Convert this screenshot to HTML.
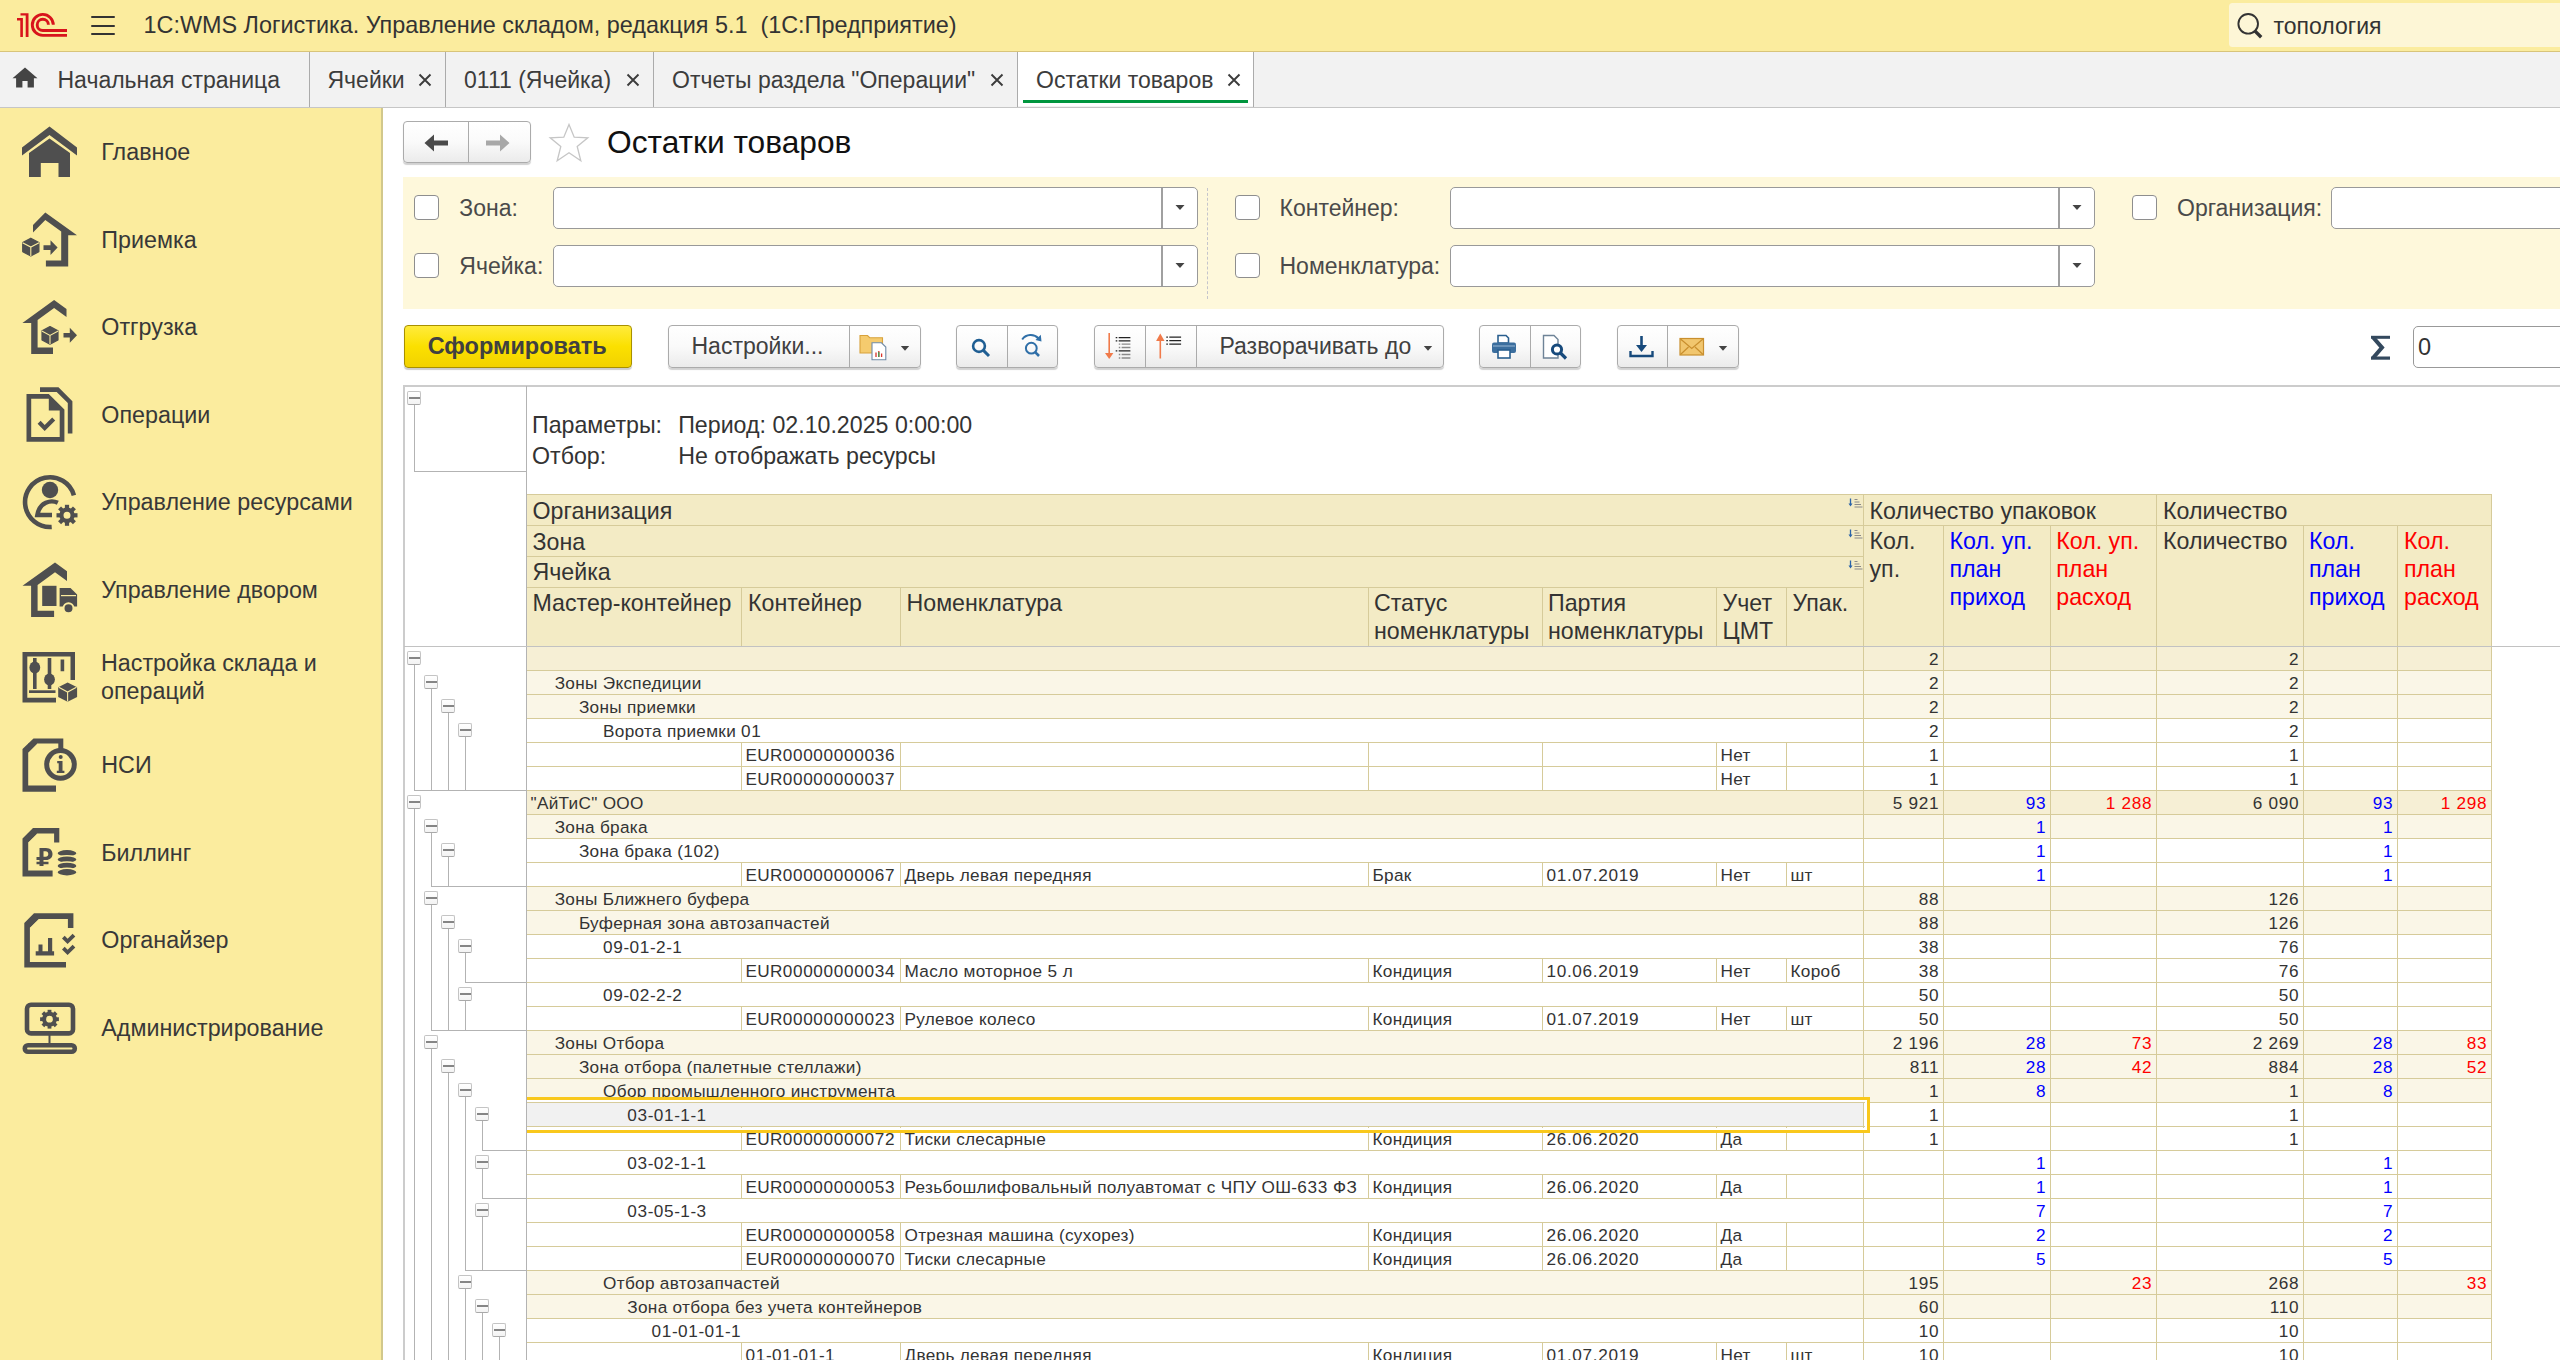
<!DOCTYPE html><html><head><meta charset="utf-8"><title>Остатки товаров</title><style>
*{box-sizing:border-box;margin:0;padding:0}
html,body{width:2560px;height:1360px;overflow:hidden;background:#fff}
body{font-family:"Liberation Sans",sans-serif;color:#333;position:relative}
.a{position:absolute;white-space:nowrap}
#hdr{left:0;top:0;width:2560px;height:52px;background:#FBEC9E;border-bottom:1.4px solid #D8C47A}
#tabs{left:0;top:52px;width:2560px;height:56px;background:#F2F2F2;border-bottom:1.5px solid #C6C6C6}
#side{left:0;top:107.5px;width:383px;height:1253px;background:#FBEC9E;border-right:2px solid #D2C88C}
.ttl{font-size:23.4px;color:#333;line-height:26px}
.tab{font-size:23px;color:#3C3C3C;line-height:26px;top:67px}
.tsep{top:52px;width:1px;height:55px;background:#C9C9C9}
.si{font-size:23px;color:#404040;line-height:28px;left:101px}
.ic{left:22px;width:56px;height:56px}
.flt{font-size:23px;color:#4A4A4A;line-height:26px}
.cb{width:25px;height:25px;border:1.6px solid #8F8F8F;border-radius:4px;background:#fff}
.inp{height:42px;border:1.8px solid #999;border-radius:5px;background:#fff}
.ddb{top:0;width:1.6px;height:100%;background:#A0A0A0}
.ddt{width:0;height:0;border-left:4.4px solid transparent;border-right:4.4px solid transparent;border-top:4.8px solid #444}
.btn{height:45px;border:1px solid #ABABAB;border-radius:4px;background:linear-gradient(#fff,#fafafa 50%,#ebebeb);box-shadow:0 1.5px 1px rgba(0,0,0,.18)}
.bdiv{top:0;width:1.3px;height:100%;background:#ABABAB}
.btxt{font-size:23px;color:#444;line-height:26px}
</style></head><body><div class="a" id="hdr"></div>
<svg class="a" style="left:10px;top:5px" width="60" height="34" viewBox="0 0 60 34">
<g fill="#D8141C"><path d="M7,13.1h5.9v18.8h-2.6v-16.4h-3.3z"/><path d="M10.5,8.2h8v23.7h-2.8v-21.5h-5.2z"/></g>
<g fill="none" stroke="#D8141C" stroke-width="2.9"><path d="M43.3,19.8A10.5,10.5 0 1 0 32.8,30.4H57"/><path d="M38.4,19.8A5.6,5.6 0 1 0 32.8,25.5H57"/></g>
</svg>
<div class="a" style="left:91px;top:15.9px;width:24px;height:2.2px;background:#333;border-radius:1px"></div>
<div class="a" style="left:91px;top:24.7px;width:24px;height:2.2px;background:#333;border-radius:1px"></div>
<div class="a" style="left:91px;top:33.3px;width:24px;height:2.2px;background:#333;border-radius:1px"></div>
<div class="a " style="top:13.99px;font-size:23.4px;line-height:23.4px;left:143.50px;color:#333;white-space:pre;">1С:WMS Логистика. Управление складом, редакция 5.1  (1С:Предприятие)</div>
<div class="a" style="left:2229px;top:3px;width:340px;height:44px;background:#FDF6D6;border-radius:3.5px"></div>
<svg class="a" style="left:2236px;top:11px" width="30" height="30" viewBox="0 0 30 30">
<circle cx="12.2" cy="12.8" r="9.8" fill="none" stroke="#333" stroke-width="1.9"/><path d="M18.6,19.6L25.2,26.2" stroke="#333" stroke-width="3.4" stroke-linecap="butt"/></svg>
<div class="a " style="top:14.93px;font-size:23px;line-height:23px;left:2273.50px;color:#333;">топология</div>
<div class="a" id="tabs"></div>
<div class="a" style="left:1018px;top:52px;width:235px;height:54px;background:#fff"></div>
<div class="a" style="left:309px;top:52px;width:1.3px;height:54.5px;background:#ABABAB"></div>
<div class="a" style="left:445px;top:52px;width:1.3px;height:54.5px;background:#ABABAB"></div>
<div class="a" style="left:653px;top:52px;width:1.3px;height:54.5px;background:#ABABAB"></div>
<div class="a" style="left:1017px;top:52px;width:1.3px;height:54.5px;background:#ABABAB"></div>
<div class="a" style="left:1253px;top:52px;width:1.3px;height:54.5px;background:#ABABAB"></div>
<div class="a" style="left:1023px;top:100px;width:225px;height:3px;background:#00963E"></div>
<svg class="a" style="left:12px;top:67px" width="26" height="21" viewBox="0 0 26 21">
<path d="M13,0.5L0.5,11.2h3.6v9.3h6.3v-6.4h5.2v6.4h6.3v-9.3h3.6z" fill="#444"/></svg>
<div class="a " style="top:68.73px;font-size:23px;line-height:23px;left:57.50px;color:#3C3C3C;">Начальная страница</div>
<div class="a " style="top:68.73px;font-size:23px;line-height:23px;left:327.50px;color:#3C3C3C;">Ячейки</div>
<svg class="a" style="left:418px;top:73px" width="14" height="14" viewBox="0 0 14 14"><path d="M1.5,1.5L12.5,12.5M12.5,1.5L1.5,12.5" stroke="#3C3C3C" stroke-width="1.9"/></svg>
<div class="a " style="top:68.73px;font-size:23px;line-height:23px;left:464.00px;color:#3C3C3C;">0111 (Ячейка)</div>
<svg class="a" style="left:626px;top:73px" width="14" height="14" viewBox="0 0 14 14"><path d="M1.5,1.5L12.5,12.5M12.5,1.5L1.5,12.5" stroke="#3C3C3C" stroke-width="1.9"/></svg>
<div class="a " style="top:68.73px;font-size:23px;line-height:23px;left:672.00px;color:#3C3C3C;">Отчеты раздела &quot;Операции&quot;</div>
<svg class="a" style="left:990px;top:73px" width="14" height="14" viewBox="0 0 14 14"><path d="M1.5,1.5L12.5,12.5M12.5,1.5L1.5,12.5" stroke="#3C3C3C" stroke-width="1.9"/></svg>
<div class="a " style="top:68.73px;font-size:23px;line-height:23px;left:1036.00px;color:#3C3C3C;">Остатки товаров</div>
<svg class="a" style="left:1226.5px;top:73px" width="14" height="14" viewBox="0 0 14 14"><path d="M1.5,1.5L12.5,12.5M12.5,1.5L1.5,12.5" stroke="#3C3C3C" stroke-width="1.9"/></svg>
<div class="a" id="side"></div>
<div class="a " style="top:140.98px;font-size:23.3px;line-height:23.3px;left:101.30px;color:#383838;">Главное</div>
<div class="a " style="top:228.58px;font-size:23.3px;line-height:23.3px;left:101.30px;color:#383838;">Приемка</div>
<div class="a " style="top:316.18px;font-size:23.3px;line-height:23.3px;left:101.30px;color:#383838;">Отгрузка</div>
<div class="a " style="top:403.78px;font-size:23.3px;line-height:23.3px;left:101.30px;color:#383838;">Операции</div>
<div class="a " style="top:491.38px;font-size:23.3px;line-height:23.3px;left:101.30px;color:#383838;">Управление ресурсами</div>
<div class="a " style="top:578.98px;font-size:23.3px;line-height:23.3px;left:101.30px;color:#383838;">Управление двором</div>
<div class="a " style="top:652.38px;font-size:23.3px;line-height:23.3px;left:101.00px;color:#383838;">Настройка склада и</div>
<div class="a " style="top:680.18px;font-size:23.3px;line-height:23.3px;left:101.00px;color:#383838;">операций</div>
<div class="a " style="top:754.18px;font-size:23.3px;line-height:23.3px;left:101.30px;color:#383838;">НСИ</div>
<div class="a " style="top:841.78px;font-size:23.3px;line-height:23.3px;left:101.30px;color:#383838;">Биллинг</div>
<div class="a " style="top:929.38px;font-size:23.3px;line-height:23.3px;left:101.30px;color:#383838;">Органайзер</div>
<div class="a " style="top:1016.98px;font-size:23.3px;line-height:23.3px;left:101.30px;color:#383838;">Администрирование</div>
<svg class="a" style="left:0;top:0" width="383" height="1100" viewBox="0 0 383 1100"><g fill="#4F4F4F"><path d="M22,147.5L49.5,126.5L77,147.5V155.5L49.5,135L22,155.5Z" /><path d="M29,153L49.5,138.5L70,153V177H58.5V163H40.8V177H29Z" /><path d="M33,225L45.3,212.5L77,235.3H68.2V266.5H45.9V260.6H61.2V231.4L45.3,220L33,232.5Z" /><path d="M30.8,238.2L38.9,242.6V251.6L30.8,256L22.7,251.6V242.6Z" stroke="#4F4F4F" stroke-width="1.2" stroke-linejoin="round"/><path d="M43.5,245.2H50.5V240.3L57.6,247.6L50.5,254.9V250H43.5Z" /><path d="M54.1,300L66.5,308.9V316.9L54.1,308L37.6,319.9V347.6H53V354H31.2V322.9H22.4Z" /><path d="M50,326.5L58,330.9V339.9L50,344.3L42,339.9V330.9Z" stroke="#4F4F4F" stroke-width="1.2" stroke-linejoin="round"/><path d="M63.5,333H69.8V327.8L77,335.3L69.8,342.8V337.6H63.5Z" /><path d="M26.5,394H48.8L64.4,409.6V441.8H26.5ZM31.2,398.7V437.1H59.7V410.5H48.8V398.7Z" fill-rule="evenodd"/><path d="M40,387.3H58.5L72.4,401.2V433.5H67.8V403L56.7,391.9H40Z" /><path d="M37.6,423.8L40.6,420.8L44.7,424.9L52.2,417.4L55.2,420.4L44.7,430.9Z" /><path d="M73.9,495.3A24.9,24.9 0 1 0 51.7,527" fill="none" stroke="#4F4F4F" stroke-width="4.6"/><circle cx="50" cy="490" r="8.2" fill="#4F4F4F"/><path d="M57.8,502.8C51,499.5 39.5,502 37.3,515H52" fill="none" stroke="#4F4F4F" stroke-width="4.4"/><rect x="64.9" y="504.8" width="4.2" height="4.6" transform="rotate(0 67 515.3)"/><rect x="64.9" y="504.8" width="4.2" height="4.6" transform="rotate(45 67 515.3)"/><rect x="64.9" y="504.8" width="4.2" height="4.6" transform="rotate(90 67 515.3)"/><rect x="64.9" y="504.8" width="4.2" height="4.6" transform="rotate(135 67 515.3)"/><rect x="64.9" y="504.8" width="4.2" height="4.6" transform="rotate(180 67 515.3)"/><rect x="64.9" y="504.8" width="4.2" height="4.6" transform="rotate(225 67 515.3)"/><rect x="64.9" y="504.8" width="4.2" height="4.6" transform="rotate(270 67 515.3)"/><rect x="64.9" y="504.8" width="4.2" height="4.6" transform="rotate(315 67 515.3)"/><circle cx="67" cy="515.3" r="5.6" fill="none" stroke="#4F4F4F" stroke-width="4.2"/><path d="M55,562.5L67,571.2V581L55,572.3L37.6,585V610.7H54.1V617H31.1V585.8H22.5Z" /><path d="M42.2,585.8H56.5V606H42.2Z" /><path d="M59.6,588H70.5L77.1,594.5V606.5H59.6Z" /><path d="M61,595.6H76" stroke="#FBEC9E" stroke-width="1.2" /><circle cx="68.5" cy="608.3" r="5" fill="#4F4F4F" stroke="#FBEC9E" stroke-width="2"/><path d="M22.5,652H75V680H70.5V656.5H27.3V697.8H56V702.6H22.5Z" /><path d="M29,690.3H55.5V693H29Z" /><path d="M34.8,658V689M49.5,658V689M62.4,659.4V671.3" fill="none" stroke="#4F4F4F" stroke-width="3.6"/><ellipse cx="34.8" cy="667.6" rx="5.4" ry="6" fill="#4F4F4F"/><ellipse cx="49.5" cy="679.6" rx="5.4" ry="6" fill="#4F4F4F"/><path d="M67.6,682.4L77.1,687.2V697L67.6,701.8L58.2,697V687.2Z" /><path d="M22.5,749L33.5,738.4H63.3V751H58.3V743.4H37.2L28.2,752.4V785.6H56V791.7H22.5Z" /><path d="M28.2,743.4H37.2L28.2,752.4Z" /><circle cx="60.5" cy="764.4" r="13.8" fill="#FBEC9E" stroke="#4F4F4F" stroke-width="5"/><path d="M58.7,761H62.5V770.8H64.4V773H56.8V770.8H58.7V763.2H57.2V761Z" /><circle cx="60.7" cy="757" r="2" fill="#4F4F4F"/><path d="M22.5,838.5L33,828H59.3V842.6H54.1V833.4H37L28.2,842.2V870.6H52.6V876.6H22.5Z" /><path d="M28.2,833.4H37L28.2,842.2Z" /><path d="M39.5,848H46C50.5,848 52.5,850.8 52.5,854C52.5,857.5 50,860 46,860H43.5V861.8H48.5V864.2H43.5V866H39.5V864.2H36.5V861.8H39.5V860H36.5V857H39.5ZM43.5,851.2V856.8H45.6C47.4,856.8 48.3,855.6 48.3,854C48.3,852.4 47.4,851.2 45.6,851.2Z" fill-rule="evenodd"/><ellipse cx="67" cy="853.2" rx="10.1" ry="3.9" fill="#4F4F4F" stroke="#FBEC9E" stroke-width="1.5"/><ellipse cx="67" cy="859.5500000000001" rx="10.1" ry="3.9" fill="#4F4F4F" stroke="#FBEC9E" stroke-width="1.5"/><ellipse cx="67" cy="865.9000000000001" rx="10.1" ry="3.9" fill="#4F4F4F" stroke="#FBEC9E" stroke-width="1.5"/><ellipse cx="67" cy="872.25" rx="10.1" ry="3.9" fill="#4F4F4F" stroke="#FBEC9E" stroke-width="1.5"/><path d="M24.3,923L34,913.3H73.4V928H67.9V918.9H38.5L29.9,927.5V962H66V967.6H24.3Z" /><path d="M29.9,918.9H38.5L29.9,927.5Z" /><path d="M35.7,951.3H54.1V955.6H35.7ZM38.5,944.5H42.5V953H38.5ZM48,938H52.2V953H48Z" /><path d="M62,938.5L64.7,935.8L67.6,938.7L72.6,933.7L75.3,936.4L67.6,944.1Z" /><path d="M62,949.5L64.7,946.8L67.6,949.7L72.6,944.7L75.3,947.4L67.6,955.1Z" /><rect x="27" y="1004.8" width="46" height="28.6" rx="4" fill="none" stroke="#4F4F4F" stroke-width="4.6"/><rect x="47.6" y="1009.8" width="3.8" height="4.4" transform="rotate(0 49.5 1019.2)"/><rect x="47.6" y="1009.8" width="3.8" height="4.4" transform="rotate(45 49.5 1019.2)"/><rect x="47.6" y="1009.8" width="3.8" height="4.4" transform="rotate(90 49.5 1019.2)"/><rect x="47.6" y="1009.8" width="3.8" height="4.4" transform="rotate(135 49.5 1019.2)"/><rect x="47.6" y="1009.8" width="3.8" height="4.4" transform="rotate(180 49.5 1019.2)"/><rect x="47.6" y="1009.8" width="3.8" height="4.4" transform="rotate(225 49.5 1019.2)"/><rect x="47.6" y="1009.8" width="3.8" height="4.4" transform="rotate(270 49.5 1019.2)"/><rect x="47.6" y="1009.8" width="3.8" height="4.4" transform="rotate(315 49.5 1019.2)"/><circle cx="49.5" cy="1019.2" r="5.4" fill="none" stroke="#4F4F4F" stroke-width="4"/><path d="M48.5,1035H50.5V1044H48.5Z" /><rect x="24.8" y="1045.3" width="50" height="6.4" rx="3.2" fill="none" stroke="#4F4F4F" stroke-width="4.6"/><path d="M22.523,242.65L30.8,247.1L39.077,242.65M30.8,247.1V256.0" fill="none" stroke="#FBEC9E" stroke-width="1.1"/><path d="M41.816,331.0L50,335.4L58.184,331.0M50,335.4V344.2" fill="none" stroke="#FBEC9E" stroke-width="1.1"/><path d="M58.76499999999999,687.35L67.6,692.1L76.435,687.35M67.6,692.1V701.6" fill="none" stroke="#FBEC9E" stroke-width="1.1"/></g></svg>
<div class="a btn" style="left:403px;top:121px;width:128px;height:42px"><div class="a bdiv" style="left:64px"></div></div>
<svg class="a" style="left:420px;top:131.5px" width="100" height="22" viewBox="0 0 100 22">
<path d="M4.5,11L14,2.5V8.5H28V13.5H14V19.5Z" fill="#4A4A4A"/>
<path d="M89.5,11L80,2.5V8.5H66V13.5H80V19.5Z" fill="#A8A8A8"/></svg>
<svg class="a" style="left:548px;top:123px" width="42" height="40" viewBox="0 0 42 40">
<path d="M21,1.5L26.2,14.2L39.8,14.8L29.2,23.5L32.8,37.8L21,29.8L9.2,37.8L12.8,23.5L2.2,14.8L15.8,14.2Z" fill="none" stroke="#C6C6C6" stroke-width="1.3" stroke-linejoin="miter"/></svg>
<div class="a " style="top:127.47px;font-size:31.7px;line-height:31.7px;left:607.00px;color:#111;">Остатки товаров</div>
<div class="a" style="left:403px;top:177px;width:2157px;height:132px;background:#FEF8DB"></div>
<div class="a" style="left:414px;top:195px;width:25px;height:25px;border:1.6px solid #8E8E8E;border-radius:4px;background:#fff"></div>
<div class="a " style="top:196.83px;font-size:23px;line-height:23px;left:459.30px;color:#4A4A4A;">Зона:</div>
<div class="a inp" style="left:553px;top:187px;width:645px"><div class="a ddb" style="left:607px"></div><svg class="a" style="left:620.5px;top:16.3px" width="10" height="7" viewBox="0 0 10 7"><path d="M0.5,1H9.5L5,6Z" fill="#444"/></svg></div>
<div class="a" style="left:414px;top:253px;width:25px;height:25px;border:1.6px solid #8E8E8E;border-radius:4px;background:#fff"></div>
<div class="a " style="top:254.83px;font-size:23px;line-height:23px;left:459.30px;color:#4A4A4A;">Ячейка:</div>
<div class="a inp" style="left:553px;top:245px;width:645px"><div class="a ddb" style="left:607px"></div><svg class="a" style="left:620.5px;top:16.3px" width="10" height="7" viewBox="0 0 10 7"><path d="M0.5,1H9.5L5,6Z" fill="#444"/></svg></div>
<div class="a" style="left:1207px;top:188px;width:0;height:111px;border-left:1px dashed #C5C5CC"></div>
<div class="a" style="left:1235px;top:195px;width:25px;height:25px;border:1.6px solid #8E8E8E;border-radius:4px;background:#fff"></div>
<div class="a " style="top:196.83px;font-size:23px;line-height:23px;left:1279.50px;color:#4A4A4A;">Контейнер:</div>
<div class="a inp" style="left:1450px;top:187px;width:645px"><div class="a ddb" style="left:607px"></div><svg class="a" style="left:620.5px;top:16.3px" width="10" height="7" viewBox="0 0 10 7"><path d="M0.5,1H9.5L5,6Z" fill="#444"/></svg></div>
<div class="a" style="left:1235px;top:253px;width:25px;height:25px;border:1.6px solid #8E8E8E;border-radius:4px;background:#fff"></div>
<div class="a " style="top:254.83px;font-size:23px;line-height:23px;left:1279.50px;color:#4A4A4A;">Номенклатура:</div>
<div class="a inp" style="left:1450px;top:245px;width:645px"><div class="a ddb" style="left:607px"></div><svg class="a" style="left:620.5px;top:16.3px" width="10" height="7" viewBox="0 0 10 7"><path d="M0.5,1H9.5L5,6Z" fill="#444"/></svg></div>
<div class="a" style="left:2132px;top:195px;width:25px;height:25px;border:1.6px solid #8E8E8E;border-radius:4px;background:#fff"></div>
<div class="a " style="top:196.83px;font-size:23px;line-height:23px;left:2177.00px;color:#4A4A4A;">Организация:</div>
<div class="a inp" style="left:2331px;top:187px;width:260px"></div>
<div class="a" style="left:404px;top:325px;width:228px;height:43px;border:1.2px solid #A89000;border-radius:4px;background:linear-gradient(#FFEB3C,#FBE000 50%,#F2D200);box-shadow:0 1.5px 1px rgba(0,0,0,.2)"></div>
<div class="a " style="top:334.71px;font-size:23.5px;line-height:23.5px;left:427.70px;color:#404040;font-weight:bold;">Сформировать</div>
<div class="a btn" style="left:667.5px;top:325px;width:253px;height:43px"><div class="a bdiv" style="left:180.5px"></div></div>
<div class="a " style="top:335.33px;font-size:23px;line-height:23px;left:691.50px;color:#404040;">Настройки...</div>
<div class="a btn" style="left:955.5px;top:325px;width:102px;height:43px"><div class="a bdiv" style="left:50.5px"></div></div>
<div class="a btn" style="left:1093.5px;top:325px;width:350px;height:43px"><div class="a bdiv" style="left:50.5px"></div><div class="a bdiv" style="left:101.5px"></div></div>
<div class="a " style="top:335.33px;font-size:23px;line-height:23px;left:1219.50px;color:#404040;">Разворачивать до</div>
<div class="a btn" style="left:1478.5px;top:325px;width:102px;height:43px"><div class="a bdiv" style="left:50.5px"></div></div>
<div class="a btn" style="left:1616.5px;top:325px;width:122px;height:43px"><div class="a bdiv" style="left:49.5px"></div></div>
<svg class="a" style="left:900px;top:345px" width="10" height="7" viewBox="0 0 10 7"><path d="M0.8,1H9.2L5,5.8Z" fill="#444"/></svg>
<svg class="a" style="left:1423px;top:345px" width="10" height="7" viewBox="0 0 10 7"><path d="M0.8,1H9.2L5,5.8Z" fill="#444"/></svg>
<svg class="a" style="left:1718px;top:345px" width="10" height="7" viewBox="0 0 10 7"><path d="M0.8,1H9.2L5,5.8Z" fill="#444"/></svg>
<svg class="a" style="left:0;top:0" width="1760" height="380" viewBox="0 0 1760 380">
<!-- settings folder -->
<path d="M860,335.5h7.5l2.2,2.2h12.8v15.3h-22.5z" fill="#F5CB6E" stroke="#D8A23C" stroke-width="1.1"/>
<path d="M872,342.8h9.5l4.3,4.3v12.6h-13.8z" fill="#fff" stroke="#6F8AA6" stroke-width="1.1"/>
<path d="M876,357v-4.5M878.8,357v-6M881.6,357v-3.5" stroke="#D9342B" stroke-width="1.3"/><path d="M878.8,357v-5" stroke="#3E9E52" stroke-width="1.3"/>
<!-- search -->
<circle cx="979" cy="346" r="5.9" fill="none" stroke="#1F5E93" stroke-width="2.6"/><path d="M983.4,350.4L989,356" stroke="#1F5E93" stroke-width="3"/>
<!-- search again -->
<circle cx="1031.3" cy="348.2" r="5.4" fill="none" stroke="#2F6FA8" stroke-width="2"/><path d="M1035.2,352.1L1039,356" stroke="#2F6FA8" stroke-width="2.6"/>
<path d="M1022.2,339.5A10.5,10.5 0 0 1 1038.5,338.5" fill="none" stroke="#2F6FA8" stroke-width="2"/><path d="M1040.8,334.8L1041.5,341.5L1035.5,340Z" fill="#2F6FA8"/>
<!-- sort down -->
<path d="M1109.2,333V357" stroke="#F07A4A" stroke-width="1.6"/><path d="M1105,353L1109.2,359L1113.4,353Z" fill="#F07A4A"/>
<path d="M1115.7,337.6h14.7M1115.7,340.9h14.7M1115.7,350.9h14.7" stroke="#222" stroke-width="1.3" stroke-dasharray="1.6 1.4 12"/>
<path d="M1118.8,344.2h11.6M1118.8,347.5h11.6M1118.8,354.5h11.6M1118.8,358h11.6" stroke="#8A8A8A" stroke-width="1.3" stroke-dasharray="1.5 1.3 12"/>
<!-- sort up -->
<path d="M1160.3,337.5V358.5" stroke="#F07A4A" stroke-width="1.6"/><path d="M1156.1,341L1160.3,333.5L1164.5,341Z" fill="#F07A4A"/>
<path d="M1166.3,337.2h14.8M1166.3,340.7h14.8M1166.3,344.2h14.8" stroke="#222" stroke-width="1.3" stroke-dasharray="1.6 1.4 12"/>
<!-- print -->
<path d="M1498,335.5h8l2.5,2.5v5h-10.5z" fill="#fff" stroke="#2A5F8F" stroke-width="1.6"/>
<rect x="1492" y="342.5" width="24" height="10.5" rx="2" fill="#3B6E9E"/>
<rect x="1498" y="350" width="12" height="8" fill="#fff" stroke="#2A5F8F" stroke-width="1.6"/>
<path d="M1493,346h22" stroke="#9BB8D4" stroke-width="1"/>
<!-- preview -->
<path d="M1543.5,335.5h10.5l4,4v18.5h-14.5z" fill="#fff" stroke="#6E8397" stroke-width="1.4"/>
<circle cx="1557" cy="349.5" r="4.6" fill="#fff" stroke="#174A7C" stroke-width="3"/><path d="M1560.5,353L1566,358.5" stroke="#174A7C" stroke-width="3.2"/>
<!-- save -->
<path d="M1641.5,336V350" stroke="#174A7C" stroke-width="2.6"/><path d="M1636,345L1641.5,352L1647,345Z" fill="#174A7C"/>
<path d="M1630.5,351V356H1652.5V351" fill="none" stroke="#174A7C" stroke-width="2.4"/>
<!-- mail -->
<rect x="1680" y="338.5" width="23.5" height="16.5" fill="#F1C66E" stroke="#C98F2E" stroke-width="1.2"/>
<path d="M1680.5,339L1691.75,348.5L1703,339M1680.5,354.5L1688.5,347M1703,354.5L1695,347" fill="none" stroke="#C98F2E" stroke-width="1.2"/>
</svg>
<svg class="a" style="left:2360px;top:330px" width="40" height="36" viewBox="2360 330 40 36"><g fill="#34495E"><rect x="2371" y="335.8" width="19" height="3"/><rect x="2371" y="356.5" width="19" height="3.2"/></g><path d="M2373.2,337.5L2382,347.6L2373.2,357.7" fill="none" stroke="#34495E" stroke-width="4" stroke-linejoin="miter"/></svg>
<div class="a inp" style="left:2413px;top:326px;width:200px;height:42px"></div>
<div class="a " style="top:336.31px;font-size:23.5px;line-height:23.5px;left:2418.00px;color:#333;">0</div>
<div class="a" style="left:403px;top:385px;width:2157px;height:2px;background:#CCCCCC"></div>
<div class="a" style="left:403px;top:385px;width:2px;height:975px;background:#CCCCCC"></div>
<div class="a" style="left:526px;top:386px;width:1px;height:974px;background:#B3B3B3"></div>
<div class="a" style="left:414px;top:405px;width:1px;height:66px;background:#B3B3B3"></div>
<div class="a" style="left:414px;top:471px;width:112px;height:1px;background:#B3B3B3"></div>
<div class="a" style="left:407px;top:391px;width:14px;height:14px;border:1px solid #C4C4C4;border-bottom-color:#A9A9A9;border-radius:2px;background:linear-gradient(#fff,#F3F3F3)"><div class="a" style="left:1.2px;top:5.2px;width:10.4px;height:2px;background:#858585"></div></div>
<div class="a " style="top:413.96px;font-size:23.2px;line-height:23.2px;left:532.00px;color:#333;">Параметры:</div>
<div class="a " style="top:413.96px;font-size:23.2px;line-height:23.2px;left:678.20px;color:#333;">Период: 02.10.2025 0:00:00</div>
<div class="a " style="top:444.56px;font-size:23.2px;line-height:23.2px;left:532.00px;color:#333;">Отбор:</div>
<div class="a " style="top:444.56px;font-size:23.2px;line-height:23.2px;left:678.20px;color:#333;">Не отображать ресурсы</div>
<div class="a" style="left:527px;top:494px;width:1964px;height:152px;background:#F3EBC5"></div>
<div class="a" style="left:527px;top:494px;width:1964px;height:1px;background:#D6CB9A"></div>
<div class="a" style="left:527px;top:525px;width:1964px;height:1px;background:#D6CB9A"></div>
<div class="a" style="left:527px;top:556px;width:1336px;height:1px;background:#D6CB9A"></div>
<div class="a" style="left:527px;top:587px;width:1336px;height:1px;background:#D6CB9A"></div>
<div class="a" style="left:1863px;top:494px;width:1px;height:152px;background:#D6CB9A"></div>
<div class="a" style="left:2156px;top:494px;width:1px;height:152px;background:#D6CB9A"></div>
<div class="a" style="left:2491px;top:494px;width:1px;height:152px;background:#D6CB9A"></div>
<div class="a" style="left:1943px;top:525px;width:1px;height:121px;background:#D6CB9A"></div>
<div class="a" style="left:2050px;top:525px;width:1px;height:121px;background:#D6CB9A"></div>
<div class="a" style="left:2303px;top:525px;width:1px;height:121px;background:#D6CB9A"></div>
<div class="a" style="left:2397px;top:525px;width:1px;height:121px;background:#D6CB9A"></div>
<div class="a" style="left:741px;top:587px;width:1px;height:59px;background:#D6CB9A"></div>
<div class="a" style="left:900px;top:587px;width:1px;height:59px;background:#D6CB9A"></div>
<div class="a" style="left:1368px;top:587px;width:1px;height:59px;background:#D6CB9A"></div>
<div class="a" style="left:1542px;top:587px;width:1px;height:59px;background:#D6CB9A"></div>
<div class="a" style="left:1716px;top:587px;width:1px;height:59px;background:#D6CB9A"></div>
<div class="a" style="left:1786px;top:587px;width:1px;height:59px;background:#D6CB9A"></div>
<div class="a " style="top:499.86px;font-size:23.2px;line-height:23.2px;left:532.50px;color:#333;">Организация</div>
<div class="a " style="top:530.66px;font-size:23.2px;line-height:23.2px;left:532.50px;color:#333;">Зона</div>
<div class="a " style="top:561.36px;font-size:23.2px;line-height:23.2px;left:532.50px;color:#333;">Ячейка</div>
<svg class="a" style="left:1848px;top:498px" width="15" height="10" viewBox="0 0 15 10"><path d="M2.5,0.5V7" stroke="#2B63A8" stroke-width="1.3"/><path d="M0.5,5.5L2.5,8.5L4.5,5.5Z" fill="#2B63A8"/><path d="M6.5,1.5h3M6.5,4h5M6.5,6.5h6.5M6.5,9h8" stroke="#8A8A8A" stroke-width="1"/></svg>
<svg class="a" style="left:1848px;top:529px" width="15" height="10" viewBox="0 0 15 10"><path d="M2.5,0.5V7" stroke="#2B63A8" stroke-width="1.3"/><path d="M0.5,5.5L2.5,8.5L4.5,5.5Z" fill="#2B63A8"/><path d="M6.5,1.5h3M6.5,4h5M6.5,6.5h6.5M6.5,9h8" stroke="#8A8A8A" stroke-width="1"/></svg>
<svg class="a" style="left:1848px;top:560px" width="15" height="10" viewBox="0 0 15 10"><path d="M2.5,0.5V7" stroke="#2B63A8" stroke-width="1.3"/><path d="M0.5,5.5L2.5,8.5L4.5,5.5Z" fill="#2B63A8"/><path d="M6.5,1.5h3M6.5,4h5M6.5,6.5h6.5M6.5,9h8" stroke="#8A8A8A" stroke-width="1"/></svg>
<div class="a " style="top:592.16px;font-size:23.2px;line-height:23.2px;left:532.50px;color:#333;">Мастер-контейнер</div>
<div class="a " style="top:592.16px;font-size:23.2px;line-height:23.2px;left:748.00px;color:#333;">Контейнер</div>
<div class="a " style="top:592.16px;font-size:23.2px;line-height:23.2px;left:906.50px;color:#333;">Номенклатура</div>
<div class="a " style="top:592.16px;font-size:23.2px;line-height:23.2px;left:1374.00px;color:#333;">Статус</div>
<div class="a " style="top:620.36px;font-size:23.2px;line-height:23.2px;left:1374.00px;color:#333;">номенклатуры</div>
<div class="a " style="top:592.16px;font-size:23.2px;line-height:23.2px;left:1548.00px;color:#333;">Партия</div>
<div class="a " style="top:620.36px;font-size:23.2px;line-height:23.2px;left:1548.00px;color:#333;">номенклатуры</div>
<div class="a " style="top:592.16px;font-size:23.2px;line-height:23.2px;left:1722.50px;color:#333;">Учет</div>
<div class="a " style="top:620.36px;font-size:23.2px;line-height:23.2px;left:1722.50px;color:#333;">ЦМТ</div>
<div class="a " style="top:592.16px;font-size:23.2px;line-height:23.2px;left:1792.50px;color:#333;">Упак.</div>
<div class="a " style="top:499.86px;font-size:23.2px;line-height:23.2px;left:1869.50px;color:#333;">Количество упаковок</div>
<div class="a " style="top:499.86px;font-size:23.2px;line-height:23.2px;left:2163.00px;color:#333;">Количество</div>
<div class="a " style="top:529.76px;font-size:23.2px;line-height:23.2px;left:1869.50px;color:#333;">Кол.</div>
<div class="a " style="top:558.16px;font-size:23.2px;line-height:23.2px;left:1869.50px;color:#333;">уп.</div>
<div class="a " style="top:529.76px;font-size:23.2px;line-height:23.2px;left:1949.50px;color:#0000FF;">Кол. уп.</div>
<div class="a " style="top:558.16px;font-size:23.2px;line-height:23.2px;left:1949.50px;color:#0000FF;">план</div>
<div class="a " style="top:586.36px;font-size:23.2px;line-height:23.2px;left:1949.50px;color:#0000FF;">приход</div>
<div class="a " style="top:529.76px;font-size:23.2px;line-height:23.2px;left:2056.30px;color:#FF0000;">Кол. уп.</div>
<div class="a " style="top:558.16px;font-size:23.2px;line-height:23.2px;left:2056.30px;color:#FF0000;">план</div>
<div class="a " style="top:586.36px;font-size:23.2px;line-height:23.2px;left:2056.30px;color:#FF0000;">расход</div>
<div class="a " style="top:529.76px;font-size:23.2px;line-height:23.2px;left:2163.00px;color:#333;">Количество</div>
<div class="a " style="top:529.76px;font-size:23.2px;line-height:23.2px;left:2309.00px;color:#0000FF;">Кол.</div>
<div class="a " style="top:558.16px;font-size:23.2px;line-height:23.2px;left:2309.00px;color:#0000FF;">план</div>
<div class="a " style="top:586.36px;font-size:23.2px;line-height:23.2px;left:2309.00px;color:#0000FF;">приход</div>
<div class="a " style="top:529.76px;font-size:23.2px;line-height:23.2px;left:2404.00px;color:#FF0000;">Кол.</div>
<div class="a " style="top:558.16px;font-size:23.2px;line-height:23.2px;left:2404.00px;color:#FF0000;">план</div>
<div class="a " style="top:586.36px;font-size:23.2px;line-height:23.2px;left:2404.00px;color:#FF0000;">расход</div>
<div class="a" style="left:527px;top:646px;width:1964px;height:24px;background:#F6EFD5"></div>
<div class="a" style="left:527px;top:670px;width:1964px;height:24px;background:#FAF6E7"></div>
<div class="a" style="left:527px;top:694px;width:1964px;height:24px;background:#FAF6E7"></div>
<div class="a" style="left:527px;top:790px;width:1964px;height:24px;background:#F6EFD5"></div>
<div class="a" style="left:527px;top:814px;width:1964px;height:24px;background:#FAF6E7"></div>
<div class="a" style="left:527px;top:886px;width:1964px;height:24px;background:#FAF6E7"></div>
<div class="a" style="left:527px;top:910px;width:1964px;height:24px;background:#FAF6E7"></div>
<div class="a" style="left:527px;top:1030px;width:1964px;height:24px;background:#FAF6E7"></div>
<div class="a" style="left:527px;top:1054px;width:1964px;height:24px;background:#FAF6E7"></div>
<div class="a" style="left:527px;top:1078px;width:1964px;height:24px;background:#FAF6E7"></div>
<div class="a" style="left:527px;top:1102px;width:1336px;height:24px;background:#F1F1F1"></div>
<div class="a" style="left:527px;top:1270px;width:1964px;height:24px;background:#FAF6E7"></div>
<div class="a" style="left:527px;top:1294px;width:1964px;height:24px;background:#FAF6E7"></div>
<div class="a" style="left:527px;top:670px;width:1964px;height:1px;background:#D6CB9A"></div>
<div class="a" style="left:527px;top:694px;width:1964px;height:1px;background:#D6CB9A"></div>
<div class="a" style="left:527px;top:718px;width:1964px;height:1px;background:#D6CB9A"></div>
<div class="a" style="left:527px;top:742px;width:1964px;height:1px;background:#D6CB9A"></div>
<div class="a" style="left:527px;top:766px;width:1964px;height:1px;background:#D6CB9A"></div>
<div class="a" style="left:741px;top:742px;width:1px;height:24px;background:#D6CB9A"></div>
<div class="a" style="left:900px;top:742px;width:1px;height:24px;background:#D6CB9A"></div>
<div class="a" style="left:1368px;top:742px;width:1px;height:24px;background:#D6CB9A"></div>
<div class="a" style="left:1542px;top:742px;width:1px;height:24px;background:#D6CB9A"></div>
<div class="a" style="left:1716px;top:742px;width:1px;height:24px;background:#D6CB9A"></div>
<div class="a" style="left:1786px;top:742px;width:1px;height:24px;background:#D6CB9A"></div>
<div class="a" style="left:527px;top:790px;width:1964px;height:1px;background:#D6CB9A"></div>
<div class="a" style="left:741px;top:766px;width:1px;height:24px;background:#D6CB9A"></div>
<div class="a" style="left:900px;top:766px;width:1px;height:24px;background:#D6CB9A"></div>
<div class="a" style="left:1368px;top:766px;width:1px;height:24px;background:#D6CB9A"></div>
<div class="a" style="left:1542px;top:766px;width:1px;height:24px;background:#D6CB9A"></div>
<div class="a" style="left:1716px;top:766px;width:1px;height:24px;background:#D6CB9A"></div>
<div class="a" style="left:1786px;top:766px;width:1px;height:24px;background:#D6CB9A"></div>
<div class="a" style="left:527px;top:814px;width:1964px;height:1px;background:#D6CB9A"></div>
<div class="a" style="left:527px;top:838px;width:1964px;height:1px;background:#D6CB9A"></div>
<div class="a" style="left:527px;top:862px;width:1964px;height:1px;background:#D6CB9A"></div>
<div class="a" style="left:527px;top:886px;width:1964px;height:1px;background:#D6CB9A"></div>
<div class="a" style="left:741px;top:862px;width:1px;height:24px;background:#D6CB9A"></div>
<div class="a" style="left:900px;top:862px;width:1px;height:24px;background:#D6CB9A"></div>
<div class="a" style="left:1368px;top:862px;width:1px;height:24px;background:#D6CB9A"></div>
<div class="a" style="left:1542px;top:862px;width:1px;height:24px;background:#D6CB9A"></div>
<div class="a" style="left:1716px;top:862px;width:1px;height:24px;background:#D6CB9A"></div>
<div class="a" style="left:1786px;top:862px;width:1px;height:24px;background:#D6CB9A"></div>
<div class="a" style="left:527px;top:910px;width:1964px;height:1px;background:#D6CB9A"></div>
<div class="a" style="left:527px;top:934px;width:1964px;height:1px;background:#D6CB9A"></div>
<div class="a" style="left:527px;top:958px;width:1964px;height:1px;background:#D6CB9A"></div>
<div class="a" style="left:527px;top:982px;width:1964px;height:1px;background:#D6CB9A"></div>
<div class="a" style="left:741px;top:958px;width:1px;height:24px;background:#D6CB9A"></div>
<div class="a" style="left:900px;top:958px;width:1px;height:24px;background:#D6CB9A"></div>
<div class="a" style="left:1368px;top:958px;width:1px;height:24px;background:#D6CB9A"></div>
<div class="a" style="left:1542px;top:958px;width:1px;height:24px;background:#D6CB9A"></div>
<div class="a" style="left:1716px;top:958px;width:1px;height:24px;background:#D6CB9A"></div>
<div class="a" style="left:1786px;top:958px;width:1px;height:24px;background:#D6CB9A"></div>
<div class="a" style="left:527px;top:1006px;width:1964px;height:1px;background:#D6CB9A"></div>
<div class="a" style="left:527px;top:1030px;width:1964px;height:1px;background:#D6CB9A"></div>
<div class="a" style="left:741px;top:1006px;width:1px;height:24px;background:#D6CB9A"></div>
<div class="a" style="left:900px;top:1006px;width:1px;height:24px;background:#D6CB9A"></div>
<div class="a" style="left:1368px;top:1006px;width:1px;height:24px;background:#D6CB9A"></div>
<div class="a" style="left:1542px;top:1006px;width:1px;height:24px;background:#D6CB9A"></div>
<div class="a" style="left:1716px;top:1006px;width:1px;height:24px;background:#D6CB9A"></div>
<div class="a" style="left:1786px;top:1006px;width:1px;height:24px;background:#D6CB9A"></div>
<div class="a" style="left:527px;top:1054px;width:1964px;height:1px;background:#D6CB9A"></div>
<div class="a" style="left:527px;top:1078px;width:1964px;height:1px;background:#D6CB9A"></div>
<div class="a" style="left:527px;top:1102px;width:1964px;height:1px;background:#D6CB9A"></div>
<div class="a" style="left:527px;top:1126px;width:1964px;height:1px;background:#D6CB9A"></div>
<div class="a" style="left:527px;top:1150px;width:1964px;height:1px;background:#D6CB9A"></div>
<div class="a" style="left:741px;top:1126px;width:1px;height:24px;background:#D6CB9A"></div>
<div class="a" style="left:900px;top:1126px;width:1px;height:24px;background:#D6CB9A"></div>
<div class="a" style="left:1368px;top:1126px;width:1px;height:24px;background:#D6CB9A"></div>
<div class="a" style="left:1542px;top:1126px;width:1px;height:24px;background:#D6CB9A"></div>
<div class="a" style="left:1716px;top:1126px;width:1px;height:24px;background:#D6CB9A"></div>
<div class="a" style="left:1786px;top:1126px;width:1px;height:24px;background:#D6CB9A"></div>
<div class="a" style="left:527px;top:1174px;width:1964px;height:1px;background:#D6CB9A"></div>
<div class="a" style="left:527px;top:1198px;width:1964px;height:1px;background:#D6CB9A"></div>
<div class="a" style="left:741px;top:1174px;width:1px;height:24px;background:#D6CB9A"></div>
<div class="a" style="left:900px;top:1174px;width:1px;height:24px;background:#D6CB9A"></div>
<div class="a" style="left:1368px;top:1174px;width:1px;height:24px;background:#D6CB9A"></div>
<div class="a" style="left:1542px;top:1174px;width:1px;height:24px;background:#D6CB9A"></div>
<div class="a" style="left:1716px;top:1174px;width:1px;height:24px;background:#D6CB9A"></div>
<div class="a" style="left:1786px;top:1174px;width:1px;height:24px;background:#D6CB9A"></div>
<div class="a" style="left:527px;top:1222px;width:1964px;height:1px;background:#D6CB9A"></div>
<div class="a" style="left:527px;top:1246px;width:1964px;height:1px;background:#D6CB9A"></div>
<div class="a" style="left:741px;top:1222px;width:1px;height:24px;background:#D6CB9A"></div>
<div class="a" style="left:900px;top:1222px;width:1px;height:24px;background:#D6CB9A"></div>
<div class="a" style="left:1368px;top:1222px;width:1px;height:24px;background:#D6CB9A"></div>
<div class="a" style="left:1542px;top:1222px;width:1px;height:24px;background:#D6CB9A"></div>
<div class="a" style="left:1716px;top:1222px;width:1px;height:24px;background:#D6CB9A"></div>
<div class="a" style="left:1786px;top:1222px;width:1px;height:24px;background:#D6CB9A"></div>
<div class="a" style="left:527px;top:1270px;width:1964px;height:1px;background:#D6CB9A"></div>
<div class="a" style="left:741px;top:1246px;width:1px;height:24px;background:#D6CB9A"></div>
<div class="a" style="left:900px;top:1246px;width:1px;height:24px;background:#D6CB9A"></div>
<div class="a" style="left:1368px;top:1246px;width:1px;height:24px;background:#D6CB9A"></div>
<div class="a" style="left:1542px;top:1246px;width:1px;height:24px;background:#D6CB9A"></div>
<div class="a" style="left:1716px;top:1246px;width:1px;height:24px;background:#D6CB9A"></div>
<div class="a" style="left:1786px;top:1246px;width:1px;height:24px;background:#D6CB9A"></div>
<div class="a" style="left:527px;top:1294px;width:1964px;height:1px;background:#D6CB9A"></div>
<div class="a" style="left:527px;top:1318px;width:1964px;height:1px;background:#D6CB9A"></div>
<div class="a" style="left:527px;top:1342px;width:1964px;height:1px;background:#D6CB9A"></div>
<div class="a" style="left:527px;top:1366px;width:1964px;height:1px;background:#D6CB9A"></div>
<div class="a" style="left:741px;top:1342px;width:1px;height:24px;background:#D6CB9A"></div>
<div class="a" style="left:900px;top:1342px;width:1px;height:24px;background:#D6CB9A"></div>
<div class="a" style="left:1368px;top:1342px;width:1px;height:24px;background:#D6CB9A"></div>
<div class="a" style="left:1542px;top:1342px;width:1px;height:24px;background:#D6CB9A"></div>
<div class="a" style="left:1716px;top:1342px;width:1px;height:24px;background:#D6CB9A"></div>
<div class="a" style="left:1786px;top:1342px;width:1px;height:24px;background:#D6CB9A"></div>
<div class="a" style="left:1863px;top:646px;width:1px;height:714px;background:#D6CB9A"></div>
<div class="a" style="left:1943px;top:646px;width:1px;height:714px;background:#D6CB9A"></div>
<div class="a" style="left:2050px;top:646px;width:1px;height:714px;background:#D6CB9A"></div>
<div class="a" style="left:2156px;top:646px;width:1px;height:714px;background:#D6CB9A"></div>
<div class="a" style="left:2303px;top:646px;width:1px;height:714px;background:#D6CB9A"></div>
<div class="a" style="left:2397px;top:646px;width:1px;height:714px;background:#D6CB9A"></div>
<div class="a" style="left:2491px;top:646px;width:1px;height:714px;background:#D6CB9A"></div>
<div class="a" style="left:404px;top:646px;width:2156px;height:1px;background:#C2C2C2"></div>
<div class="a " style="top:651.04px;font-size:17.2px;line-height:17.2px;right:620.84px;color:#333;letter-spacing:0.66px;">2</div>
<div class="a " style="top:651.04px;font-size:17.2px;line-height:17.2px;right:260.84px;color:#333;letter-spacing:0.66px;">2</div>
<div class="a " style="top:675.04px;font-size:17.2px;line-height:17.2px;left:554.70px;color:#333;letter-spacing:0.3px;">Зоны Экспедиции</div>
<div class="a " style="top:675.04px;font-size:17.2px;line-height:17.2px;right:620.84px;color:#333;letter-spacing:0.66px;">2</div>
<div class="a " style="top:675.04px;font-size:17.2px;line-height:17.2px;right:260.84px;color:#333;letter-spacing:0.66px;">2</div>
<div class="a " style="top:699.04px;font-size:17.2px;line-height:17.2px;left:578.90px;color:#333;letter-spacing:0.3px;">Зоны приемки</div>
<div class="a " style="top:699.04px;font-size:17.2px;line-height:17.2px;right:620.84px;color:#333;letter-spacing:0.66px;">2</div>
<div class="a " style="top:699.04px;font-size:17.2px;line-height:17.2px;right:260.84px;color:#333;letter-spacing:0.66px;">2</div>
<div class="a " style="top:723.04px;font-size:17.2px;line-height:17.2px;left:603.10px;color:#333;letter-spacing:0.3px;">Ворота приемки <span style="letter-spacing:0.66px">01</span></div>
<div class="a " style="top:723.04px;font-size:17.2px;line-height:17.2px;right:620.84px;color:#333;letter-spacing:0.66px;">2</div>
<div class="a " style="top:723.04px;font-size:17.2px;line-height:17.2px;right:260.84px;color:#333;letter-spacing:0.66px;">2</div>
<div class="a " style="top:747.04px;font-size:17.2px;line-height:17.2px;left:745.50px;color:#333;letter-spacing:0.3px;">EUR<span style="letter-spacing:0.66px">00000000036</span></div>
<div class="a " style="top:747.04px;font-size:17.2px;line-height:17.2px;left:1720.50px;color:#333;letter-spacing:0.3px;">Нет</div>
<div class="a " style="top:747.04px;font-size:17.2px;line-height:17.2px;right:620.84px;color:#333;letter-spacing:0.66px;">1</div>
<div class="a " style="top:747.04px;font-size:17.2px;line-height:17.2px;right:260.84px;color:#333;letter-spacing:0.66px;">1</div>
<div class="a " style="top:771.04px;font-size:17.2px;line-height:17.2px;left:745.50px;color:#333;letter-spacing:0.3px;">EUR<span style="letter-spacing:0.66px">00000000037</span></div>
<div class="a " style="top:771.04px;font-size:17.2px;line-height:17.2px;left:1720.50px;color:#333;letter-spacing:0.3px;">Нет</div>
<div class="a " style="top:771.04px;font-size:17.2px;line-height:17.2px;right:620.84px;color:#333;letter-spacing:0.66px;">1</div>
<div class="a " style="top:771.04px;font-size:17.2px;line-height:17.2px;right:260.84px;color:#333;letter-spacing:0.66px;">1</div>
<div class="a " style="top:795.04px;font-size:17.2px;line-height:17.2px;left:530.50px;color:#333;letter-spacing:0.3px;">&quot;АйТиС&quot; ООО</div>
<div class="a " style="top:795.04px;font-size:17.2px;line-height:17.2px;right:620.84px;color:#333;letter-spacing:0.66px;">5 921</div>
<div class="a " style="top:795.04px;font-size:17.2px;line-height:17.2px;right:513.84px;color:#0000FF;letter-spacing:0.66px;">93</div>
<div class="a " style="top:795.04px;font-size:17.2px;line-height:17.2px;right:407.84px;color:#FF0000;letter-spacing:0.66px;">1 288</div>
<div class="a " style="top:795.04px;font-size:17.2px;line-height:17.2px;right:260.84px;color:#333;letter-spacing:0.66px;">6 090</div>
<div class="a " style="top:795.04px;font-size:17.2px;line-height:17.2px;right:166.84px;color:#0000FF;letter-spacing:0.66px;">93</div>
<div class="a " style="top:795.04px;font-size:17.2px;line-height:17.2px;right:72.84px;color:#FF0000;letter-spacing:0.66px;">1 298</div>
<div class="a " style="top:819.04px;font-size:17.2px;line-height:17.2px;left:554.70px;color:#333;letter-spacing:0.3px;">Зона брака</div>
<div class="a " style="top:819.04px;font-size:17.2px;line-height:17.2px;right:513.84px;color:#0000FF;letter-spacing:0.66px;">1</div>
<div class="a " style="top:819.04px;font-size:17.2px;line-height:17.2px;right:166.84px;color:#0000FF;letter-spacing:0.66px;">1</div>
<div class="a " style="top:843.04px;font-size:17.2px;line-height:17.2px;left:578.90px;color:#333;letter-spacing:0.3px;">Зона брака (<span style="letter-spacing:0.66px">102</span>)</div>
<div class="a " style="top:843.04px;font-size:17.2px;line-height:17.2px;right:513.84px;color:#0000FF;letter-spacing:0.66px;">1</div>
<div class="a " style="top:843.04px;font-size:17.2px;line-height:17.2px;right:166.84px;color:#0000FF;letter-spacing:0.66px;">1</div>
<div class="a " style="top:867.04px;font-size:17.2px;line-height:17.2px;left:745.50px;color:#333;letter-spacing:0.3px;">EUR<span style="letter-spacing:0.66px">00000000067</span></div>
<div class="a " style="top:867.04px;font-size:17.2px;line-height:17.2px;left:904.50px;color:#333;letter-spacing:0.3px;">Дверь левая передняя</div>
<div class="a " style="top:867.04px;font-size:17.2px;line-height:17.2px;left:1372.50px;color:#333;letter-spacing:0.3px;">Брак</div>
<div class="a " style="top:867.04px;font-size:17.2px;line-height:17.2px;left:1546.50px;color:#333;letter-spacing:0.3px;"><span style="letter-spacing:0.66px">01.07.2019</span></div>
<div class="a " style="top:867.04px;font-size:17.2px;line-height:17.2px;left:1720.50px;color:#333;letter-spacing:0.3px;">Нет</div>
<div class="a " style="top:867.04px;font-size:17.2px;line-height:17.2px;left:1790.50px;color:#333;letter-spacing:0.3px;">шт</div>
<div class="a " style="top:867.04px;font-size:17.2px;line-height:17.2px;right:513.84px;color:#0000FF;letter-spacing:0.66px;">1</div>
<div class="a " style="top:867.04px;font-size:17.2px;line-height:17.2px;right:166.84px;color:#0000FF;letter-spacing:0.66px;">1</div>
<div class="a " style="top:891.04px;font-size:17.2px;line-height:17.2px;left:554.70px;color:#333;letter-spacing:0.3px;">Зоны Ближнего буфера</div>
<div class="a " style="top:891.04px;font-size:17.2px;line-height:17.2px;right:620.84px;color:#333;letter-spacing:0.66px;">88</div>
<div class="a " style="top:891.04px;font-size:17.2px;line-height:17.2px;right:260.84px;color:#333;letter-spacing:0.66px;">126</div>
<div class="a " style="top:915.04px;font-size:17.2px;line-height:17.2px;left:578.90px;color:#333;letter-spacing:0.3px;">Буферная зона автозапчастей</div>
<div class="a " style="top:915.04px;font-size:17.2px;line-height:17.2px;right:620.84px;color:#333;letter-spacing:0.66px;">88</div>
<div class="a " style="top:915.04px;font-size:17.2px;line-height:17.2px;right:260.84px;color:#333;letter-spacing:0.66px;">126</div>
<div class="a " style="top:939.04px;font-size:17.2px;line-height:17.2px;left:603.10px;color:#333;letter-spacing:0.3px;"><span style="letter-spacing:0.66px">09</span>-<span style="letter-spacing:0.66px">01</span>-<span style="letter-spacing:0.66px">2</span>-<span style="letter-spacing:0.66px">1</span></div>
<div class="a " style="top:939.04px;font-size:17.2px;line-height:17.2px;right:620.84px;color:#333;letter-spacing:0.66px;">38</div>
<div class="a " style="top:939.04px;font-size:17.2px;line-height:17.2px;right:260.84px;color:#333;letter-spacing:0.66px;">76</div>
<div class="a " style="top:963.04px;font-size:17.2px;line-height:17.2px;left:745.50px;color:#333;letter-spacing:0.3px;">EUR<span style="letter-spacing:0.66px">00000000034</span></div>
<div class="a " style="top:963.04px;font-size:17.2px;line-height:17.2px;left:904.50px;color:#333;letter-spacing:0.3px;">Масло моторное <span style="letter-spacing:0.66px">5</span> л</div>
<div class="a " style="top:963.04px;font-size:17.2px;line-height:17.2px;left:1372.50px;color:#333;letter-spacing:0.3px;">Кондиция</div>
<div class="a " style="top:963.04px;font-size:17.2px;line-height:17.2px;left:1546.50px;color:#333;letter-spacing:0.3px;"><span style="letter-spacing:0.66px">10.06.2019</span></div>
<div class="a " style="top:963.04px;font-size:17.2px;line-height:17.2px;left:1720.50px;color:#333;letter-spacing:0.3px;">Нет</div>
<div class="a " style="top:963.04px;font-size:17.2px;line-height:17.2px;left:1790.50px;color:#333;letter-spacing:0.3px;">Короб</div>
<div class="a " style="top:963.04px;font-size:17.2px;line-height:17.2px;right:620.84px;color:#333;letter-spacing:0.66px;">38</div>
<div class="a " style="top:963.04px;font-size:17.2px;line-height:17.2px;right:260.84px;color:#333;letter-spacing:0.66px;">76</div>
<div class="a " style="top:987.04px;font-size:17.2px;line-height:17.2px;left:603.10px;color:#333;letter-spacing:0.3px;"><span style="letter-spacing:0.66px">09</span>-<span style="letter-spacing:0.66px">02</span>-<span style="letter-spacing:0.66px">2</span>-<span style="letter-spacing:0.66px">2</span></div>
<div class="a " style="top:987.04px;font-size:17.2px;line-height:17.2px;right:620.84px;color:#333;letter-spacing:0.66px;">50</div>
<div class="a " style="top:987.04px;font-size:17.2px;line-height:17.2px;right:260.84px;color:#333;letter-spacing:0.66px;">50</div>
<div class="a " style="top:1011.04px;font-size:17.2px;line-height:17.2px;left:745.50px;color:#333;letter-spacing:0.3px;">EUR<span style="letter-spacing:0.66px">00000000023</span></div>
<div class="a " style="top:1011.04px;font-size:17.2px;line-height:17.2px;left:904.50px;color:#333;letter-spacing:0.3px;">Рулевое колесо</div>
<div class="a " style="top:1011.04px;font-size:17.2px;line-height:17.2px;left:1372.50px;color:#333;letter-spacing:0.3px;">Кондиция</div>
<div class="a " style="top:1011.04px;font-size:17.2px;line-height:17.2px;left:1546.50px;color:#333;letter-spacing:0.3px;"><span style="letter-spacing:0.66px">01.07.2019</span></div>
<div class="a " style="top:1011.04px;font-size:17.2px;line-height:17.2px;left:1720.50px;color:#333;letter-spacing:0.3px;">Нет</div>
<div class="a " style="top:1011.04px;font-size:17.2px;line-height:17.2px;left:1790.50px;color:#333;letter-spacing:0.3px;">шт</div>
<div class="a " style="top:1011.04px;font-size:17.2px;line-height:17.2px;right:620.84px;color:#333;letter-spacing:0.66px;">50</div>
<div class="a " style="top:1011.04px;font-size:17.2px;line-height:17.2px;right:260.84px;color:#333;letter-spacing:0.66px;">50</div>
<div class="a " style="top:1035.04px;font-size:17.2px;line-height:17.2px;left:554.70px;color:#333;letter-spacing:0.3px;">Зоны Отбора</div>
<div class="a " style="top:1035.04px;font-size:17.2px;line-height:17.2px;right:620.84px;color:#333;letter-spacing:0.66px;">2 196</div>
<div class="a " style="top:1035.04px;font-size:17.2px;line-height:17.2px;right:513.84px;color:#0000FF;letter-spacing:0.66px;">28</div>
<div class="a " style="top:1035.04px;font-size:17.2px;line-height:17.2px;right:407.84px;color:#FF0000;letter-spacing:0.66px;">73</div>
<div class="a " style="top:1035.04px;font-size:17.2px;line-height:17.2px;right:260.84px;color:#333;letter-spacing:0.66px;">2 269</div>
<div class="a " style="top:1035.04px;font-size:17.2px;line-height:17.2px;right:166.84px;color:#0000FF;letter-spacing:0.66px;">28</div>
<div class="a " style="top:1035.04px;font-size:17.2px;line-height:17.2px;right:72.84px;color:#FF0000;letter-spacing:0.66px;">83</div>
<div class="a " style="top:1059.04px;font-size:17.2px;line-height:17.2px;left:578.90px;color:#333;letter-spacing:0.3px;">Зона отбора (палетные стеллажи)</div>
<div class="a " style="top:1059.04px;font-size:17.2px;line-height:17.2px;right:620.84px;color:#333;letter-spacing:0.66px;">811</div>
<div class="a " style="top:1059.04px;font-size:17.2px;line-height:17.2px;right:513.84px;color:#0000FF;letter-spacing:0.66px;">28</div>
<div class="a " style="top:1059.04px;font-size:17.2px;line-height:17.2px;right:407.84px;color:#FF0000;letter-spacing:0.66px;">42</div>
<div class="a " style="top:1059.04px;font-size:17.2px;line-height:17.2px;right:260.84px;color:#333;letter-spacing:0.66px;">884</div>
<div class="a " style="top:1059.04px;font-size:17.2px;line-height:17.2px;right:166.84px;color:#0000FF;letter-spacing:0.66px;">28</div>
<div class="a " style="top:1059.04px;font-size:17.2px;line-height:17.2px;right:72.84px;color:#FF0000;letter-spacing:0.66px;">52</div>
<div class="a " style="top:1083.04px;font-size:17.2px;line-height:17.2px;left:603.10px;color:#333;letter-spacing:0.3px;">Обор промышленного инструмента</div>
<div class="a " style="top:1083.04px;font-size:17.2px;line-height:17.2px;right:620.84px;color:#333;letter-spacing:0.66px;">1</div>
<div class="a " style="top:1083.04px;font-size:17.2px;line-height:17.2px;right:513.84px;color:#0000FF;letter-spacing:0.66px;">8</div>
<div class="a " style="top:1083.04px;font-size:17.2px;line-height:17.2px;right:260.84px;color:#333;letter-spacing:0.66px;">1</div>
<div class="a " style="top:1083.04px;font-size:17.2px;line-height:17.2px;right:166.84px;color:#0000FF;letter-spacing:0.66px;">8</div>
<div class="a " style="top:1107.04px;font-size:17.2px;line-height:17.2px;left:627.30px;color:#333;letter-spacing:0.3px;"><span style="letter-spacing:0.66px">03</span>-<span style="letter-spacing:0.66px">01</span>-<span style="letter-spacing:0.66px">1</span>-<span style="letter-spacing:0.66px">1</span></div>
<div class="a " style="top:1107.04px;font-size:17.2px;line-height:17.2px;right:620.84px;color:#333;letter-spacing:0.66px;">1</div>
<div class="a " style="top:1107.04px;font-size:17.2px;line-height:17.2px;right:260.84px;color:#333;letter-spacing:0.66px;">1</div>
<div class="a " style="top:1131.04px;font-size:17.2px;line-height:17.2px;left:745.50px;color:#333;letter-spacing:0.3px;">EUR<span style="letter-spacing:0.66px">00000000072</span></div>
<div class="a " style="top:1131.04px;font-size:17.2px;line-height:17.2px;left:904.50px;color:#333;letter-spacing:0.3px;">Тиски слесарные</div>
<div class="a " style="top:1131.04px;font-size:17.2px;line-height:17.2px;left:1372.50px;color:#333;letter-spacing:0.3px;">Кондиция</div>
<div class="a " style="top:1131.04px;font-size:17.2px;line-height:17.2px;left:1546.50px;color:#333;letter-spacing:0.3px;"><span style="letter-spacing:0.66px">26.06.2020</span></div>
<div class="a " style="top:1131.04px;font-size:17.2px;line-height:17.2px;left:1720.50px;color:#333;letter-spacing:0.3px;">Да</div>
<div class="a " style="top:1131.04px;font-size:17.2px;line-height:17.2px;right:620.84px;color:#333;letter-spacing:0.66px;">1</div>
<div class="a " style="top:1131.04px;font-size:17.2px;line-height:17.2px;right:260.84px;color:#333;letter-spacing:0.66px;">1</div>
<div class="a " style="top:1155.04px;font-size:17.2px;line-height:17.2px;left:627.30px;color:#333;letter-spacing:0.3px;"><span style="letter-spacing:0.66px">03</span>-<span style="letter-spacing:0.66px">02</span>-<span style="letter-spacing:0.66px">1</span>-<span style="letter-spacing:0.66px">1</span></div>
<div class="a " style="top:1155.04px;font-size:17.2px;line-height:17.2px;right:513.84px;color:#0000FF;letter-spacing:0.66px;">1</div>
<div class="a " style="top:1155.04px;font-size:17.2px;line-height:17.2px;right:166.84px;color:#0000FF;letter-spacing:0.66px;">1</div>
<div class="a " style="top:1179.04px;font-size:17.2px;line-height:17.2px;left:745.50px;color:#333;letter-spacing:0.3px;">EUR<span style="letter-spacing:0.66px">00000000053</span></div>
<div class="a " style="top:1179.04px;font-size:17.2px;line-height:17.2px;left:904.50px;color:#333;letter-spacing:0.3px;">Резьбошлифовальный полуавтомат с ЧПУ ОШ-<span style="letter-spacing:0.66px">633</span> ФЗ</div>
<div class="a " style="top:1179.04px;font-size:17.2px;line-height:17.2px;left:1372.50px;color:#333;letter-spacing:0.3px;">Кондиция</div>
<div class="a " style="top:1179.04px;font-size:17.2px;line-height:17.2px;left:1546.50px;color:#333;letter-spacing:0.3px;"><span style="letter-spacing:0.66px">26.06.2020</span></div>
<div class="a " style="top:1179.04px;font-size:17.2px;line-height:17.2px;left:1720.50px;color:#333;letter-spacing:0.3px;">Да</div>
<div class="a " style="top:1179.04px;font-size:17.2px;line-height:17.2px;right:513.84px;color:#0000FF;letter-spacing:0.66px;">1</div>
<div class="a " style="top:1179.04px;font-size:17.2px;line-height:17.2px;right:166.84px;color:#0000FF;letter-spacing:0.66px;">1</div>
<div class="a " style="top:1203.04px;font-size:17.2px;line-height:17.2px;left:627.30px;color:#333;letter-spacing:0.3px;"><span style="letter-spacing:0.66px">03</span>-<span style="letter-spacing:0.66px">05</span>-<span style="letter-spacing:0.66px">1</span>-<span style="letter-spacing:0.66px">3</span></div>
<div class="a " style="top:1203.04px;font-size:17.2px;line-height:17.2px;right:513.84px;color:#0000FF;letter-spacing:0.66px;">7</div>
<div class="a " style="top:1203.04px;font-size:17.2px;line-height:17.2px;right:166.84px;color:#0000FF;letter-spacing:0.66px;">7</div>
<div class="a " style="top:1227.04px;font-size:17.2px;line-height:17.2px;left:745.50px;color:#333;letter-spacing:0.3px;">EUR<span style="letter-spacing:0.66px">00000000058</span></div>
<div class="a " style="top:1227.04px;font-size:17.2px;line-height:17.2px;left:904.50px;color:#333;letter-spacing:0.3px;">Отрезная машина (сухорез)</div>
<div class="a " style="top:1227.04px;font-size:17.2px;line-height:17.2px;left:1372.50px;color:#333;letter-spacing:0.3px;">Кондиция</div>
<div class="a " style="top:1227.04px;font-size:17.2px;line-height:17.2px;left:1546.50px;color:#333;letter-spacing:0.3px;"><span style="letter-spacing:0.66px">26.06.2020</span></div>
<div class="a " style="top:1227.04px;font-size:17.2px;line-height:17.2px;left:1720.50px;color:#333;letter-spacing:0.3px;">Да</div>
<div class="a " style="top:1227.04px;font-size:17.2px;line-height:17.2px;right:513.84px;color:#0000FF;letter-spacing:0.66px;">2</div>
<div class="a " style="top:1227.04px;font-size:17.2px;line-height:17.2px;right:166.84px;color:#0000FF;letter-spacing:0.66px;">2</div>
<div class="a " style="top:1251.04px;font-size:17.2px;line-height:17.2px;left:745.50px;color:#333;letter-spacing:0.3px;">EUR<span style="letter-spacing:0.66px">00000000070</span></div>
<div class="a " style="top:1251.04px;font-size:17.2px;line-height:17.2px;left:904.50px;color:#333;letter-spacing:0.3px;">Тиски слесарные</div>
<div class="a " style="top:1251.04px;font-size:17.2px;line-height:17.2px;left:1372.50px;color:#333;letter-spacing:0.3px;">Кондиция</div>
<div class="a " style="top:1251.04px;font-size:17.2px;line-height:17.2px;left:1546.50px;color:#333;letter-spacing:0.3px;"><span style="letter-spacing:0.66px">26.06.2020</span></div>
<div class="a " style="top:1251.04px;font-size:17.2px;line-height:17.2px;left:1720.50px;color:#333;letter-spacing:0.3px;">Да</div>
<div class="a " style="top:1251.04px;font-size:17.2px;line-height:17.2px;right:513.84px;color:#0000FF;letter-spacing:0.66px;">5</div>
<div class="a " style="top:1251.04px;font-size:17.2px;line-height:17.2px;right:166.84px;color:#0000FF;letter-spacing:0.66px;">5</div>
<div class="a " style="top:1275.04px;font-size:17.2px;line-height:17.2px;left:603.10px;color:#333;letter-spacing:0.3px;">Отбор автозапчастей</div>
<div class="a " style="top:1275.04px;font-size:17.2px;line-height:17.2px;right:620.84px;color:#333;letter-spacing:0.66px;">195</div>
<div class="a " style="top:1275.04px;font-size:17.2px;line-height:17.2px;right:407.84px;color:#FF0000;letter-spacing:0.66px;">23</div>
<div class="a " style="top:1275.04px;font-size:17.2px;line-height:17.2px;right:260.84px;color:#333;letter-spacing:0.66px;">268</div>
<div class="a " style="top:1275.04px;font-size:17.2px;line-height:17.2px;right:72.84px;color:#FF0000;letter-spacing:0.66px;">33</div>
<div class="a " style="top:1299.04px;font-size:17.2px;line-height:17.2px;left:627.30px;color:#333;letter-spacing:0.3px;">Зона отбора без учета контейнеров</div>
<div class="a " style="top:1299.04px;font-size:17.2px;line-height:17.2px;right:620.84px;color:#333;letter-spacing:0.66px;">60</div>
<div class="a " style="top:1299.04px;font-size:17.2px;line-height:17.2px;right:260.84px;color:#333;letter-spacing:0.66px;">110</div>
<div class="a " style="top:1323.04px;font-size:17.2px;line-height:17.2px;left:651.50px;color:#333;letter-spacing:0.3px;"><span style="letter-spacing:0.66px">01</span>-<span style="letter-spacing:0.66px">01</span>-<span style="letter-spacing:0.66px">01</span>-<span style="letter-spacing:0.66px">1</span></div>
<div class="a " style="top:1323.04px;font-size:17.2px;line-height:17.2px;right:620.84px;color:#333;letter-spacing:0.66px;">10</div>
<div class="a " style="top:1323.04px;font-size:17.2px;line-height:17.2px;right:260.84px;color:#333;letter-spacing:0.66px;">10</div>
<div class="a " style="top:1347.04px;font-size:17.2px;line-height:17.2px;left:745.50px;color:#333;letter-spacing:0.3px;"><span style="letter-spacing:0.66px">01</span>-<span style="letter-spacing:0.66px">01</span>-<span style="letter-spacing:0.66px">01</span>-<span style="letter-spacing:0.66px">1</span></div>
<div class="a " style="top:1347.04px;font-size:17.2px;line-height:17.2px;left:904.50px;color:#333;letter-spacing:0.3px;">Дверь левая передняя</div>
<div class="a " style="top:1347.04px;font-size:17.2px;line-height:17.2px;left:1372.50px;color:#333;letter-spacing:0.3px;">Кондиция</div>
<div class="a " style="top:1347.04px;font-size:17.2px;line-height:17.2px;left:1546.50px;color:#333;letter-spacing:0.3px;"><span style="letter-spacing:0.66px">01.07.2019</span></div>
<div class="a " style="top:1347.04px;font-size:17.2px;line-height:17.2px;left:1720.50px;color:#333;letter-spacing:0.3px;">Нет</div>
<div class="a " style="top:1347.04px;font-size:17.2px;line-height:17.2px;left:1790.50px;color:#333;letter-spacing:0.3px;">шт</div>
<div class="a " style="top:1347.04px;font-size:17.2px;line-height:17.2px;right:620.84px;color:#333;letter-spacing:0.66px;">10</div>
<div class="a " style="top:1347.04px;font-size:17.2px;line-height:17.2px;right:260.84px;color:#333;letter-spacing:0.66px;">10</div>
<div class="a" style="left:414px;top:665px;width:1px;height:125px;background:#B3B3B3"></div>
<div class="a" style="left:414px;top:790px;width:112px;height:1px;background:#B3B3B3"></div>
<div class="a" style="left:407px;top:651px;width:14px;height:14px;border:1px solid #C4C4C4;border-bottom-color:#A9A9A9;border-radius:2px;background:linear-gradient(#fff,#F3F3F3)"><div class="a" style="left:1.2px;top:5.2px;width:10.4px;height:2px;background:#858585"></div></div>
<div class="a" style="left:431px;top:689px;width:1px;height:101px;background:#B3B3B3"></div>
<div class="a" style="left:431px;top:790px;width:95px;height:1px;background:#B3B3B3"></div>
<div class="a" style="left:424px;top:675px;width:14px;height:14px;border:1px solid #C4C4C4;border-bottom-color:#A9A9A9;border-radius:2px;background:linear-gradient(#fff,#F3F3F3)"><div class="a" style="left:1.2px;top:5.2px;width:10.4px;height:2px;background:#858585"></div></div>
<div class="a" style="left:448px;top:713px;width:1px;height:77px;background:#B3B3B3"></div>
<div class="a" style="left:448px;top:790px;width:78px;height:1px;background:#B3B3B3"></div>
<div class="a" style="left:441px;top:699px;width:14px;height:14px;border:1px solid #C4C4C4;border-bottom-color:#A9A9A9;border-radius:2px;background:linear-gradient(#fff,#F3F3F3)"><div class="a" style="left:1.2px;top:5.2px;width:10.4px;height:2px;background:#858585"></div></div>
<div class="a" style="left:465px;top:737px;width:1px;height:53px;background:#B3B3B3"></div>
<div class="a" style="left:465px;top:790px;width:61px;height:1px;background:#B3B3B3"></div>
<div class="a" style="left:458px;top:723px;width:14px;height:14px;border:1px solid #C4C4C4;border-bottom-color:#A9A9A9;border-radius:2px;background:linear-gradient(#fff,#F3F3F3)"><div class="a" style="left:1.2px;top:5.2px;width:10.4px;height:2px;background:#858585"></div></div>
<div class="a" style="left:414px;top:809px;width:1px;height:551px;background:#B3B3B3"></div>
<div class="a" style="left:407px;top:795px;width:14px;height:14px;border:1px solid #C4C4C4;border-bottom-color:#A9A9A9;border-radius:2px;background:linear-gradient(#fff,#F3F3F3)"><div class="a" style="left:1.2px;top:5.2px;width:10.4px;height:2px;background:#858585"></div></div>
<div class="a" style="left:431px;top:833px;width:1px;height:53px;background:#B3B3B3"></div>
<div class="a" style="left:431px;top:886px;width:95px;height:1px;background:#B3B3B3"></div>
<div class="a" style="left:424px;top:819px;width:14px;height:14px;border:1px solid #C4C4C4;border-bottom-color:#A9A9A9;border-radius:2px;background:linear-gradient(#fff,#F3F3F3)"><div class="a" style="left:1.2px;top:5.2px;width:10.4px;height:2px;background:#858585"></div></div>
<div class="a" style="left:448px;top:857px;width:1px;height:29px;background:#B3B3B3"></div>
<div class="a" style="left:448px;top:886px;width:78px;height:1px;background:#B3B3B3"></div>
<div class="a" style="left:441px;top:843px;width:14px;height:14px;border:1px solid #C4C4C4;border-bottom-color:#A9A9A9;border-radius:2px;background:linear-gradient(#fff,#F3F3F3)"><div class="a" style="left:1.2px;top:5.2px;width:10.4px;height:2px;background:#858585"></div></div>
<div class="a" style="left:431px;top:905px;width:1px;height:125px;background:#B3B3B3"></div>
<div class="a" style="left:431px;top:1030px;width:95px;height:1px;background:#B3B3B3"></div>
<div class="a" style="left:424px;top:891px;width:14px;height:14px;border:1px solid #C4C4C4;border-bottom-color:#A9A9A9;border-radius:2px;background:linear-gradient(#fff,#F3F3F3)"><div class="a" style="left:1.2px;top:5.2px;width:10.4px;height:2px;background:#858585"></div></div>
<div class="a" style="left:448px;top:929px;width:1px;height:101px;background:#B3B3B3"></div>
<div class="a" style="left:448px;top:1030px;width:78px;height:1px;background:#B3B3B3"></div>
<div class="a" style="left:441px;top:915px;width:14px;height:14px;border:1px solid #C4C4C4;border-bottom-color:#A9A9A9;border-radius:2px;background:linear-gradient(#fff,#F3F3F3)"><div class="a" style="left:1.2px;top:5.2px;width:10.4px;height:2px;background:#858585"></div></div>
<div class="a" style="left:465px;top:953px;width:1px;height:29px;background:#B3B3B3"></div>
<div class="a" style="left:465px;top:982px;width:61px;height:1px;background:#B3B3B3"></div>
<div class="a" style="left:458px;top:939px;width:14px;height:14px;border:1px solid #C4C4C4;border-bottom-color:#A9A9A9;border-radius:2px;background:linear-gradient(#fff,#F3F3F3)"><div class="a" style="left:1.2px;top:5.2px;width:10.4px;height:2px;background:#858585"></div></div>
<div class="a" style="left:465px;top:1001px;width:1px;height:29px;background:#B3B3B3"></div>
<div class="a" style="left:465px;top:1030px;width:61px;height:1px;background:#B3B3B3"></div>
<div class="a" style="left:458px;top:987px;width:14px;height:14px;border:1px solid #C4C4C4;border-bottom-color:#A9A9A9;border-radius:2px;background:linear-gradient(#fff,#F3F3F3)"><div class="a" style="left:1.2px;top:5.2px;width:10.4px;height:2px;background:#858585"></div></div>
<div class="a" style="left:431px;top:1049px;width:1px;height:311px;background:#B3B3B3"></div>
<div class="a" style="left:424px;top:1035px;width:14px;height:14px;border:1px solid #C4C4C4;border-bottom-color:#A9A9A9;border-radius:2px;background:linear-gradient(#fff,#F3F3F3)"><div class="a" style="left:1.2px;top:5.2px;width:10.4px;height:2px;background:#858585"></div></div>
<div class="a" style="left:448px;top:1073px;width:1px;height:287px;background:#B3B3B3"></div>
<div class="a" style="left:441px;top:1059px;width:14px;height:14px;border:1px solid #C4C4C4;border-bottom-color:#A9A9A9;border-radius:2px;background:linear-gradient(#fff,#F3F3F3)"><div class="a" style="left:1.2px;top:5.2px;width:10.4px;height:2px;background:#858585"></div></div>
<div class="a" style="left:465px;top:1097px;width:1px;height:173px;background:#B3B3B3"></div>
<div class="a" style="left:465px;top:1270px;width:61px;height:1px;background:#B3B3B3"></div>
<div class="a" style="left:458px;top:1083px;width:14px;height:14px;border:1px solid #C4C4C4;border-bottom-color:#A9A9A9;border-radius:2px;background:linear-gradient(#fff,#F3F3F3)"><div class="a" style="left:1.2px;top:5.2px;width:10.4px;height:2px;background:#858585"></div></div>
<div class="a" style="left:482px;top:1121px;width:1px;height:29px;background:#B3B3B3"></div>
<div class="a" style="left:482px;top:1150px;width:44px;height:1px;background:#B3B3B3"></div>
<div class="a" style="left:475px;top:1107px;width:14px;height:14px;border:1px solid #C4C4C4;border-bottom-color:#A9A9A9;border-radius:2px;background:linear-gradient(#fff,#F3F3F3)"><div class="a" style="left:1.2px;top:5.2px;width:10.4px;height:2px;background:#858585"></div></div>
<div class="a" style="left:482px;top:1169px;width:1px;height:29px;background:#B3B3B3"></div>
<div class="a" style="left:482px;top:1198px;width:44px;height:1px;background:#B3B3B3"></div>
<div class="a" style="left:475px;top:1155px;width:14px;height:14px;border:1px solid #C4C4C4;border-bottom-color:#A9A9A9;border-radius:2px;background:linear-gradient(#fff,#F3F3F3)"><div class="a" style="left:1.2px;top:5.2px;width:10.4px;height:2px;background:#858585"></div></div>
<div class="a" style="left:482px;top:1217px;width:1px;height:53px;background:#B3B3B3"></div>
<div class="a" style="left:482px;top:1270px;width:44px;height:1px;background:#B3B3B3"></div>
<div class="a" style="left:475px;top:1203px;width:14px;height:14px;border:1px solid #C4C4C4;border-bottom-color:#A9A9A9;border-radius:2px;background:linear-gradient(#fff,#F3F3F3)"><div class="a" style="left:1.2px;top:5.2px;width:10.4px;height:2px;background:#858585"></div></div>
<div class="a" style="left:465px;top:1289px;width:1px;height:71px;background:#B3B3B3"></div>
<div class="a" style="left:458px;top:1275px;width:14px;height:14px;border:1px solid #C4C4C4;border-bottom-color:#A9A9A9;border-radius:2px;background:linear-gradient(#fff,#F3F3F3)"><div class="a" style="left:1.2px;top:5.2px;width:10.4px;height:2px;background:#858585"></div></div>
<div class="a" style="left:482px;top:1313px;width:1px;height:47px;background:#B3B3B3"></div>
<div class="a" style="left:475px;top:1299px;width:14px;height:14px;border:1px solid #C4C4C4;border-bottom-color:#A9A9A9;border-radius:2px;background:linear-gradient(#fff,#F3F3F3)"><div class="a" style="left:1.2px;top:5.2px;width:10.4px;height:2px;background:#858585"></div></div>
<div class="a" style="left:499px;top:1337px;width:1px;height:23px;background:#B3B3B3"></div>
<div class="a" style="left:492px;top:1323px;width:14px;height:14px;border:1px solid #C4C4C4;border-bottom-color:#A9A9A9;border-radius:2px;background:linear-gradient(#fff,#F3F3F3)"><div class="a" style="left:1.2px;top:5.2px;width:10.4px;height:2px;background:#858585"></div></div>
<div class="a" style="left:527px;top:1096.5px;width:1343px;height:36.5px;border:3.4px solid #F9C81C;border-left:none"><div class="a" style="left:0;top:0;right:0;bottom:0;border:2.2px solid #fff;border-left:none;background:transparent"></div></div></body></html>
